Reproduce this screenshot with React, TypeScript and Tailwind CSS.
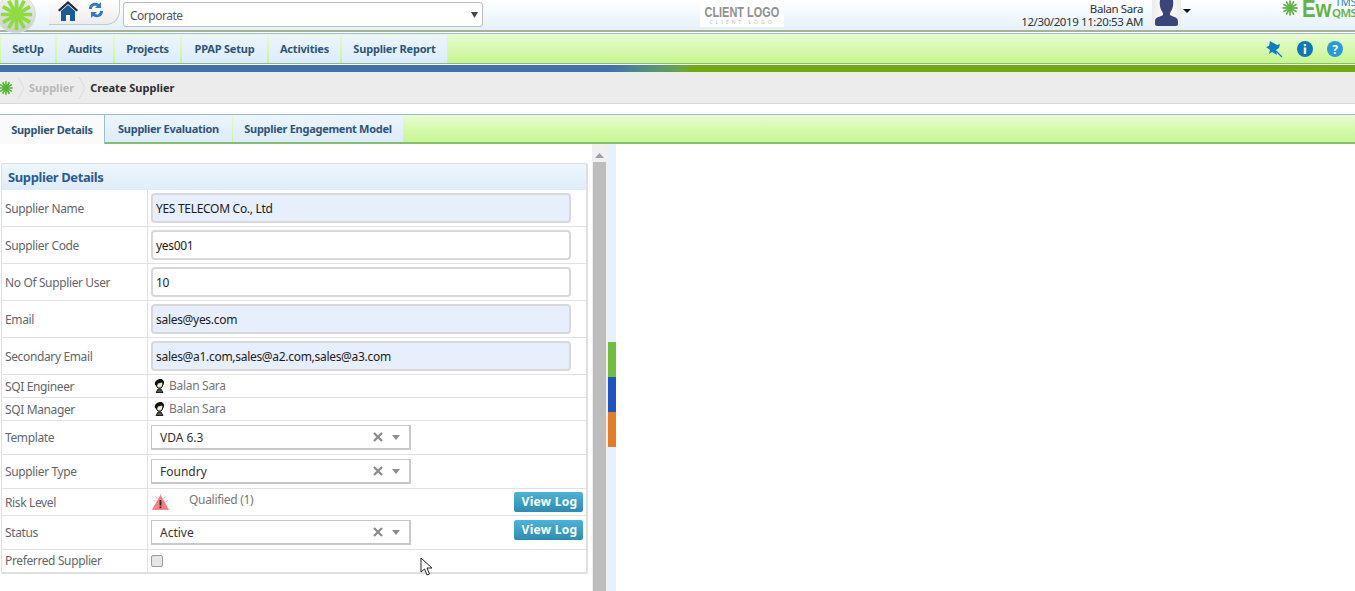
import React from "react";

function Burst({ size, className }: { size: number; className?: string }) {
  const spokes = [0, 30, 60, 90, 120, 150];
  return (
    <svg width={size} height={size} viewBox="0 0 40 40" className={className}>
      {spokes.map((a) => (
        <line key={a} x1="20" y1="1" x2="20" y2="39" stroke="currentColor" strokeWidth="4.500" transform={`rotate(${a} 20 20)`} />
      ))}
      <circle cx="20" cy="20" r="8" fill="currentColor" />
    </svg>
  );
}

function Person() {
  return (
    <svg width="12" height="14" viewBox="0 0 12 14" className="mr-[4px] shrink-0">
      <path d="M3 5c0-3 2-4 4-4s4 1 3 4l-1 3-1 1H5L4 8z" fill="#f3e6cf" stroke="#000" strokeWidth="1" />
      <path d="M2 6C1 2 5 0 7.500 0S12 2.500 10.500 6L9 3.500 5 4.500 4 7z" fill="#111" />
      <path d="M3 13.500l2-3.500h3l2 3.500z" fill="#555" stroke="#000" strokeWidth="0.800" />
    </svg>
  );
}

function Row({ label, h, children, lift }: { label: string; h: string; children?: React.ReactNode; lift?: boolean }) {
  return (
    <div className={`flex border-b border-[#e2e2e2] last:border-b-0 ${h}`}>
      <div className={`w-[146px] shrink-0 border-r border-[#e2e2e2] pl-[3px] flex items-center text-[12px] tracking-[-0.37px] text-[#63666b] ${lift ? "pt-[2px]" : ""}`}>
        {label}
      </div>
      <div className="flex-1 min-w-0 flex items-center pl-[3px] pr-[3px]">{children}</div>
    </div>
  );
}

function TextBox({ value, filled }: { value: string; filled?: boolean }) {
  return (
    <div className={`w-[420px] h-[30px] rounded-[4px] border-2 border-[#d8d8d8] flex items-center pl-[3px] pt-[2px] text-[12px] tracking-[-0.3px] text-[#1c1c1c] ${filled ? "bg-[#e7effd]" : "bg-white"}`}>
      {value}
    </div>
  );
}

function Select({ value }: { value: string }) {
  return (
    <div className="w-[260px] h-[25px] border border-[#c8c8c8] border-b-2 border-r-2 bg-white flex items-center pl-2 text-[12px] text-[#333]">
      <span className="flex-1 pt-[2px]">{value}</span>
      <svg width="10" height="10" viewBox="0 0 10 10" className="mr-[9px]">
        <path d="M1 1l8 8M9 1l-8 8" stroke="#8c8c8c" strokeWidth="2.400" />
      </svg>
      <svg width="8" height="5" viewBox="0 0 8 5" className="mr-[9px]">
        <path d="M0 0h8L4 5z" fill="#8c8c8c" />
      </svg>
    </div>
  );
}

function ViewLog() {
  return (
    <div className="w-[69px] h-[20px] pl-[2px] rounded-[2px] bg-gradient-to-b from-[#4cb3d8] to-[#2b8db2] text-white font-bold text-[12px] flex items-center justify-center tracking-[0.3px]">
      View Log
    </div>
  );
}

const navItems: [string, string][] = [
  ["SetUp", "w-[54px]"],
  ["Audits", "w-[56px]"],
  ["Projects", "w-[65px]"],
  ["PPAP Setup", "w-[85px]"],
  ["Activities", "w-[71px]"],
  ["Supplier Report", "w-[105px]"],
];

export default function App() {
  return (
    <div className="relative h-[591px] w-[1355px] overflow-hidden bg-white font-['Noto_Sans',sans-serif]">
      {/* round logo over the header */}
      <div className="absolute left-[-4px] top-[-5px] z-10 w-[40px] h-[38px] rounded-full bg-gradient-to-b from-[#f4f4f4] to-[#c9cfc6] border border-[#d8dcd4] flex items-center justify-center text-[#8fdc42]">
        <Burst size={33} />
      </div>

      {/* header */}
      <header className="h-[30px] bg-gradient-to-b from-[#ffffff] to-[#e4f1fb] flex items-start">
        <div className="ml-[49px] w-[71px] h-[25px] rounded-br-[14px] border-r border-b border-[#c9c9c9] bg-gradient-to-b from-[#ffffff] to-[#ececec] flex items-start pl-[9px] gap-[10px] shrink-0">
          <svg width="20" height="20" viewBox="0 0 20 20" className="mt-[1px]">
            <path d="M10 0L0 9l1.500 1.500L10 3l8.500 7.500L20 9z" fill="#222b33" />
            <path d="M3 10l7-6 7 6v10h-5v-6H8v6H3z" fill="#1c5a96" />
          </svg>
          <svg width="16" height="18" viewBox="0 0 16 18" className="mt-[1px]">
            <path d="M1 8C1 3 6 0 11 3l2-2v6H7l2-2C6 4 4 5 4 8z" fill="#2f78c4" />
            <path d="M15 10c0 5-5 8-10 5l-2 2v-6h6l-2 2c3 1 5 0 5-3z" fill="#2f78c4" />
          </svg>
        </div>
        <div className="ml-[3px] mt-[2px] w-[360px] h-[25px] rounded-[3px] border border-[#bdbdbd] bg-white flex items-center pl-[6px] pr-[3px] text-[12px] tracking-[-0.5px] text-[#555] shrink-0">
          <span className="flex-1 pt-[2px]">Corporate</span>
          <svg width="7" height="7" viewBox="0 0 7 7" className="mr-[1px]">
            <path d="M0 1h7L3.500 7z" fill="#444" />
          </svg>
        </div>
        <div className="ml-[217px] mt-[2px] w-[84px] h-[25px] bg-white flex flex-col items-center justify-center shrink-0 leading-none whitespace-nowrap">
          <span className="text-[14px] font-bold text-[#8f9194] font-['Liberation_Sans',sans-serif] scale-x-[0.78] leading-[14px]">CLIENT LOGO</span>
          <span className="text-[5px] tracking-[3px] text-[#bdbdbd] leading-[6px]">CLIENT LOGO</span>
        </div>
        <div className="ml-[231px] w-[128px] shrink-0 flex flex-col items-end text-[11.500px] tracking-[-0.4px] text-[#333] leading-[13px] pt-[2px] whitespace-nowrap">
          <span>Balan Sara</span>
          <span>12/30/2019 11:20:53 AM</span>
        </div>
        <div className="ml-[9px] w-[29px] h-[26px] rounded-b-[4px] bg-gradient-to-r from-[#ececec] via-[#ffffff] to-[#ececec] shrink-0 flex justify-center">
          <svg width="23" height="26" viewBox="0 0 23 26">
            <path d="M5 0h13c1 6-1 10-3 13v2c3 2 8 2 8 6v3c0 1-1 2-2 2H2c-1 0-2-1-2-2v-3c0-4 5-4 8-6v-2C6 10 4 6 5 0z" fill="#3a4677" />
          </svg>
        </div>
        <svg width="8" height="4" viewBox="0 0 8 4" className="ml-[2px] mt-[9px] shrink-0">
          <path d="M0 0h8L4 4z" fill="#111" />
        </svg>
        <div className="ml-[91px] w-[73px] shrink-0 flex items-start text-[#63b448]">
          <Burst size={16} className="shrink-0" />
          <span className="ml-[4px] w-[30px] origin-left scale-x-[0.85] text-[24px] font-bold leading-[17px] font-['Liberation_Sans',sans-serif] shrink-0">Ew</span>
          <div className="ml-auto flex flex-col items-end leading-none shrink-0 -mt-[3px]">
            <span className="text-[11px] leading-[10px] tracking-[-0.3px] text-[#2f7fc1]">TMS</span>
            <span className="text-[11.500px] leading-[11px] tracking-[-0.6px] font-semibold">QMS</span>
          </div>
        </div>
      </header>
      <div className="h-[2px] bg-[#aab292]" />
      <div className="h-px bg-white" />

      {/* main nav */}
      <nav className="h-[31px] pt-px border-t border-t-[#9dbbdc] border-b border-b-[#8cb878] bg-gradient-to-b from-[#e8fbd0] to-[#c6f78e] flex items-stretch pl-px">
        {navItems.map(([t, w]) => (
          <div key={t} className={`${w} mr-[2px] bg-gradient-to-b from-[#edf5fc] to-[#dcecfb] flex items-center justify-center text-[11px] font-bold text-[#2e5578] tracking-[-0.2px]`}>
            {t}
          </div>
        ))}
        <div className="ml-auto flex items-center gap-[14px] pr-[12px]">
          <svg width="17" height="17" viewBox="0 0 17 17">
            <path d="M4 0l7 4 3-1-1 4-3 2 1 5-5-3-3 2 1-4-4-3 3-1z" fill="#0f7fc4" />
            <path d="M10 10l6 6" stroke="#0f7fc4" strokeWidth="1.200" />
          </svg>
          <svg width="16" height="16" viewBox="0 0 16 16">
            <circle cx="8" cy="8" r="8" fill="#0d78b8" />
            <rect x="6.800" y="6.500" width="2.400" height="6.500" fill="#fff" />
            <rect x="6.800" y="3" width="2.400" height="2.200" fill="#fff" />
          </svg>
          <svg width="16" height="16" viewBox="0 0 16 16">
            <circle cx="8" cy="8" r="8" fill="#2a9ae0" />
            <text x="8" y="12.500" textAnchor="middle" fontSize="12" fontWeight="700" fill="#fff">?</text>
          </svg>
        </div>
      </nav>

      {/* colour band */}
      <div className="h-[1px]" />
      <div className="h-[7px] bg-gradient-to-r from-[#3f72aa] from-[45%] to-[#71ab10] to-[51%]" />

      {/* breadcrumb */}
      <div className="h-[32px] bg-[#ececec] border-b border-[#d8d8d8] flex items-center text-[11px] font-bold">
        <Burst size={14} className="text-[#4fb82e] -ml-px" />
        <svg width="8" height="24" viewBox="0 0 8 24" className="ml-[4px]"><path d="M1 1l6 11-6 11" fill="none" stroke="#dcdcdc" /></svg>
        <span className="ml-[4px] pt-[2px] text-[#b8b8b8]">Supplier</span>
        <svg width="8" height="24" viewBox="0 0 8 24" className="ml-[4px]"><path d="M1 1l6 11-6 11" fill="none" stroke="#dcdcdc" /></svg>
        <span className="ml-[4px] pt-[2px] text-[#2d2d33]">Create Supplier</span>
      </div>

      {/* tabs */}
      <div className="mt-[10px] h-[30px] border-t border-[#9dbbdc] border-b-2 border-b-[#84c06a] bg-gradient-to-b from-[#e8fbd0] to-[#c6f78e] flex text-[11px] font-bold text-[#2e5578] tracking-[-0.28px]">
        <div className="w-[105px] h-[29px] pt-[2px] bg-[#fafafa] border-r border-[#9dbbdc] flex items-center justify-center shrink-0">Supplier Details</div>
        <div className="w-[127px] pt-[2px] bg-gradient-to-b from-[#edf5fc] to-[#dcecfb] flex items-center justify-center shrink-0">Supplier Evaluation</div>
        <div className="ml-px w-[170px] pt-[2px] bg-gradient-to-b from-[#edf5fc] to-[#dcecfb] flex items-center justify-center shrink-0">Supplier Engagement Model</div>
      </div>

      {/* content */}
      <div className="flex h-[447px]">
        <div className="w-[592px] shrink-0 pt-[19px] pl-px pr-[4px]">
          <section className="border border-[#e0e0e0] border-b-2 border-r-2 rounded-[2px]">
            <div className="h-[26px] pt-[2px] bg-gradient-to-b from-[#eef6fd] to-[#deedfb] flex items-center pl-[6px] text-[13px] font-bold tracking-[-0.4px] text-[#2b5c8f]">
              Supplier Details
            </div>
            <Row label="Supplier Name" h="h-[37px]" lift><TextBox value="YES TELECOM Co., Ltd" filled /></Row>
            <Row label="Supplier Code" h="h-[37px]" lift><TextBox value="yes001" /></Row>
            <Row label="No Of Supplier User" h="h-[37px]" lift><TextBox value="10" /></Row>
            <Row label="Email" h="h-[37px]" lift><TextBox value="sales@yes.com" filled /></Row>
            <Row label="Secondary Email" h="h-[37px]" lift><TextBox value="sales@a1.com,sales@a2.com,sales@a3.com" filled /></Row>
            <Row label="SQI Engineer" h="h-[23px]" lift>
              <div className="flex items-center pl-[2px] text-[12px] tracking-[-0.3px] text-[#777]"><Person />Balan Sara</div>
            </Row>
            <Row label="SQI Manager" h="h-[23px]" lift>
              <div className="flex items-center pl-[2px] text-[12px] tracking-[-0.3px] text-[#777]"><Person />Balan Sara</div>
            </Row>
            <Row label="Template" h="h-[34px]"><Select value="VDA 6.3" /></Row>
            <Row label="Supplier Type" h="h-[34px]"><Select value="Foundry" /></Row>
            <Row label="Risk Level" h="h-[27px]" lift>
              <div className="flex items-center w-full justify-between">
                <div className="flex items-center text-[12px] tracking-[-0.3px] text-[#777]">
                  <svg width="17" height="16" viewBox="0 0 17 16" className="ml-px">
                    <path d="M8.500 1.500L16.500 15.500H0.500z" fill="#f27f86" stroke="#ea6a72" strokeWidth="0.600" />
                    <rect x="7.600" y="6" width="1.800" height="5.500" fill="#4a1a1a" />
                    <rect x="7.600" y="12.500" width="1.800" height="1.700" fill="#4a1a1a" />
                    <path d="M8.500 0v1.500M3.500 2l1.500 2.500M13.500 2L12 4.500M1 6l2 1.500M16 6l-2 1.500" stroke="#f4a0a4" strokeWidth="0.800" />
                  </svg>
                  <span className="ml-[20px] -mt-[5px]">Qualified (1)</span>
                </div>
                <ViewLog />
              </div>
            </Row>
            <Row label="Status" h="h-[34px]">
              <div className="flex items-start w-full justify-between">
                <Select value="Active" />
                <ViewLog />
              </div>
            </Row>
            <Row label="Preferred Supplier" h="h-[22px]">
              <div className="w-[12px] h-[12px] rounded-[2px] bg-[#e6e6e6] border border-[#9a9a9a]" />
            </Row>
          </section>
        </div>

        {/* scrollbar */}
        <div className="w-[15px] shrink-0 bg-[#f0f0f0] flex flex-col items-center">
          <svg width="9" height="5" viewBox="0 0 9 5" className="mt-[9px] mb-[4px] shrink-0"><path d="M4.500 0L9 5H0z" fill="#a0a0a0" /></svg>
          <div className="w-[13px] flex-1 bg-[#bdbdbd]" />
        </div>

        {/* side strip */}
        <div className="w-[9px] shrink-0 bg-[#e6f2fb] pt-[198px] pl-px flex flex-col">
          <div className="h-[35px] bg-[#6fbe3e]" />
          <div className="h-[35px] bg-[#1c54c4]" />
          <div className="h-[35px] bg-[#e67c26]" />
        </div>
      </div>

      {/* mouse pointer */}
      <svg width="13" height="20" viewBox="0 0 13 20" className="absolute left-[420px] top-[557px]">
        <path d="M1 1v14l3.500-3 2.500 6 2.500-1-2.500-6H12z" fill="#fff" stroke="#222" strokeWidth="1" />
      </svg>
    </div>
  );
}
